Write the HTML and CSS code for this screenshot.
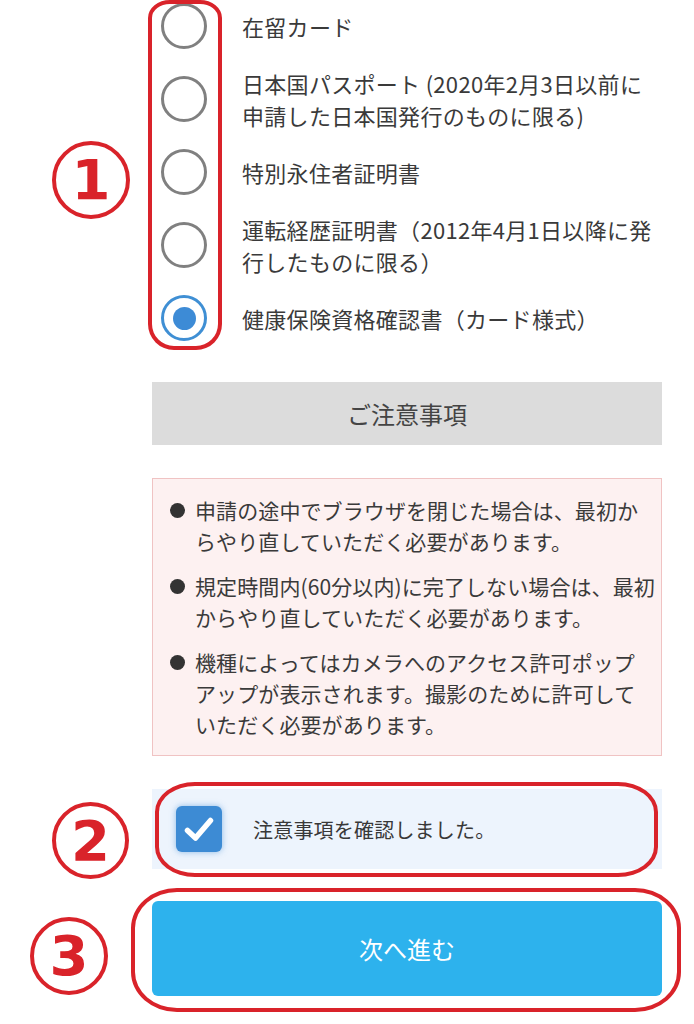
FILE: index.html
```html
<!DOCTYPE html>
<html lang="ja">
<head>
<meta charset="utf-8">
<title>本人確認書類の選択</title>
<link rel="stylesheet" href="styles.css">
</head>
<body>
<main class="page">
  <section class="doc-list">
    <div class="row">
      <span class="radio"></span>
      <span class="label">在留カード</span>
    </div>
    <div class="row">
      <span class="radio"></span>
      <span class="label">日本国パスポート (2020年2月3日以前に<br>申請した日本国発行のものに限る)</span>
    </div>
    <div class="row">
      <span class="radio"></span>
      <span class="label">特別永住者証明書</span>
    </div>
    <div class="row">
      <span class="radio"></span>
      <span class="label">運転経歴証明書（2012年4月1日以降に発<br>行したものに限る）</span>
    </div>
    <div class="row">
      <span class="radio radio-on"><span class="dot"></span></span>
      <span class="label">健康保険資格確認書（カード様式）</span>
    </div>
    <div class="mark mark-list"></div>
    <div class="num num-1">1</div>
  </section>

  <h2 class="notice-head">ご注意事項</h2>

  <ul class="notice">
    <li><span class="bullet"></span><span class="ntext">申請の途中でブラウザを閉じた場合は、最初か<br>らやり直していただく必要があります。</span></li>
    <li><span class="bullet"></span><span class="ntext">規定時間内(60分以内)に完了しない場合は、最初<br>からやり直していただく必要があります。</span></li>
    <li><span class="bullet"></span><span class="ntext">機種によってはカメラへのアクセス許可ポップ<br>アップが表示されます。撮影のために許可して<br>いただく必要があります。</span></li>
  </ul>

  <div class="confirm">
    <span class="checkbox">
      <svg viewBox="0 0 46 46" width="46" height="46"><path d="M11.5 24.5 L19.5 32 L34.5 14.5" fill="none" stroke="#fff" stroke-width="5.5" stroke-linecap="round" stroke-linejoin="round"/></svg>
    </span>
    <span class="confirm-text">注意事項を確認しました。</span>
    <div class="mark mark-confirm"></div>
    <div class="num num-2">2</div>
  </div>

  <div class="next-wrap">
    <button class="next">次へ進む</button>
    <div class="mark mark-next"></div>
    <div class="num num-3">3</div>
  </div>
</main>
</body>
</html>
```
FILE: styles.css
```css
* { box-sizing: border-box; }

body {
  margin: 0;
  background: #ffffff;
  font-family: "Noto Sans CJK JP", "Noto Sans", sans-serif;
  color: #383838;
}

.page {
  width: 694px;
  padding: 3px 32px 28px 152px;
}

.doc-list {
  position: relative;
  display: flex;
  flex-direction: column;
  gap: 18px;
}

.row {
  display: flex;
  align-items: center;
  gap: 35px;
  padding-left: 9px;
}

.radio {
  flex: none;
  width: 46px;
  height: 46px;
  border: 3px solid #808080;
  border-radius: 50%;
  display: flex;
  align-items: center;
  justify-content: center;
}

.radio-on { border-color: #3f8fd4; }

.dot {
  width: 23px;
  height: 23px;
  border-radius: 50%;
  background: #3d8bd6;
}

.label {
  font-size: 22px;
  line-height: 32px;
  letter-spacing: 0.3px;
  white-space: nowrap;
  color: #3a3a3a;
}

.mark {
  position: absolute;
  border: 4px solid #d9232a;
  pointer-events: none;
}

.mark-list {
  left: -4px;
  top: -3px;
  width: 74px;
  height: 350px;
  border-radius: 22px 22px 26px 26px / 18px 18px 26px 26px;
}

.num {
  position: absolute;
  width: 78px;
  height: 78px;
  border: 4px solid #d9232a;
  border-radius: 50%;
  color: #d9232a;
  font-family: "DejaVu Sans", sans-serif;
  font-weight: bold;
  font-size: 56px;
  line-height: 70px;
  text-align: center;
}

.num-1 { left: -100px; top: 138px; }

.notice-head {
  margin: 41px 0 0;
  height: 63px;
  background: #dcdcdc;
  font-size: 24px;
  font-weight: normal;
  line-height: 63px;
  text-align: center;
  color: #444444;
}

.notice {
  list-style: none;
  margin: 33px 0 0;
  padding: 16px 15px 15px 17px;
  border: 1px solid #f0c3c3;
  background: #fdf1f1;
  display: flex;
  flex-direction: column;
  gap: 14px;
}

.notice li {
  display: flex;
  align-items: flex-start;
}

.bullet {
  flex: none;
  width: 15px;
  height: 15px;
  margin: 8px 10px 0 0;
  border-radius: 50%;
  background: #333333;
}

.ntext {
  font-size: 21px;
  line-height: 31px;
  letter-spacing: 0.1px;
  white-space: nowrap;
  color: #3a3a3a;
}

.confirm {
  position: relative;
  margin-top: 33px;
  height: 80px;
  background: #edf4fd;
  display: flex;
  align-items: center;
  padding-left: 24px;
  gap: 31px;
}

.checkbox {
  flex: none;
  width: 46px;
  height: 46px;
  border-radius: 6px;
  background: #3d8bd4;
  box-shadow: 0 0 6px rgba(61, 139, 212, 0.55);
  display: flex;
}

.confirm-text {
  font-size: 20px;
  letter-spacing: 0.2px;
  color: #383838;
}

.mark-confirm {
  left: 3px;
  top: -7px;
  width: 503px;
  height: 95px;
  border-radius: 40px / 30px;
}

.num-2 { left: -100px; top: 13px; width: 77px; height: 77px; }

.next-wrap {
  position: relative;
  margin-top: 32px;
}

.next {
  display: block;
  width: 100%;
  height: 95px;
  border: 0;
  border-radius: 6px;
  background: #2db2ed;
  color: #ffffff;
  font-family: "Noto Sans CJK JP", "Noto Sans", sans-serif;
  font-size: 24px;
  margin: 0;
}

.mark-next {
  left: -21px;
  top: -13px;
  width: 550px;
  height: 124px;
  border-radius: 46px / 40px;
}

.num-3 { left: -122px; top: 16px; }
```
